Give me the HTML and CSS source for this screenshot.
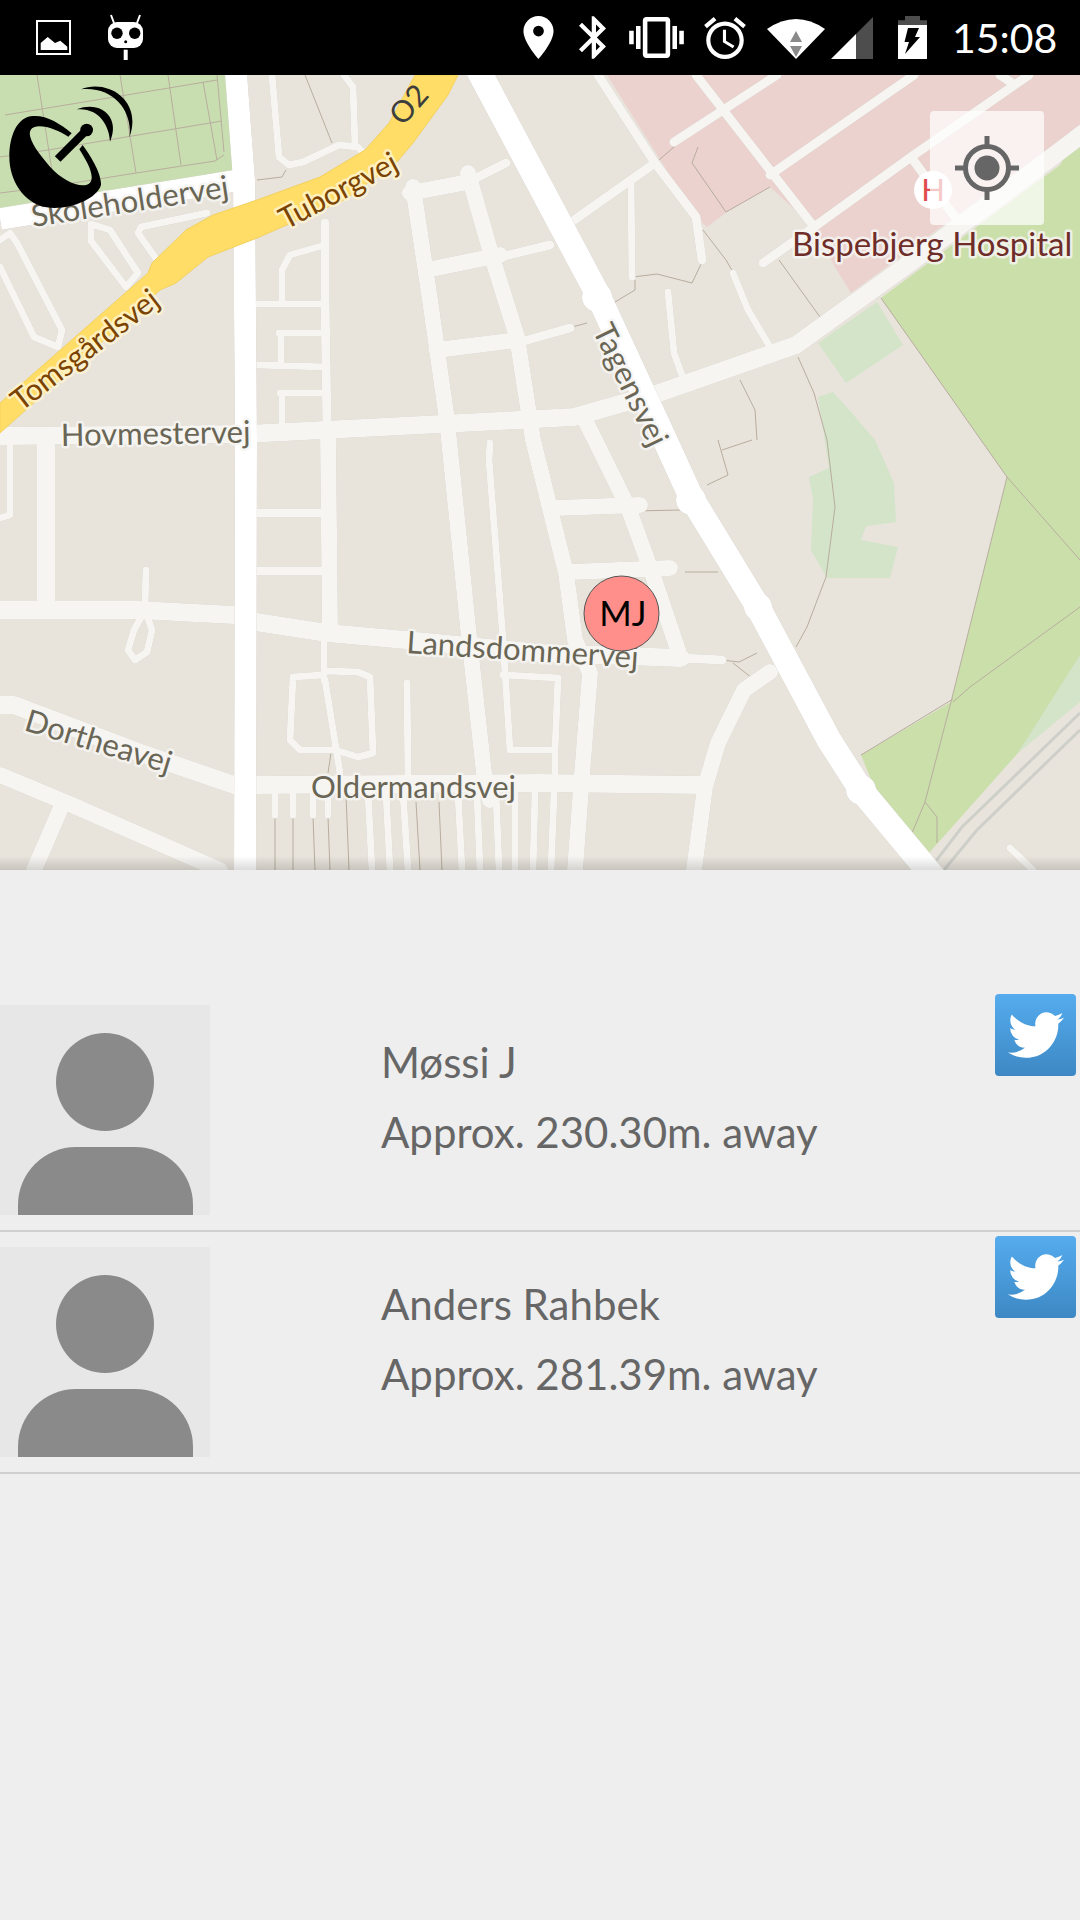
FILE: index.html
```html
<!DOCTYPE html>
<html lang="en">
<head>
    <meta charset="UTF-8">
    <meta name="viewport" content="width=device-width, initial-scale=1.0">
    <title>Nearby</title>
    <link rel="stylesheet" href="styles.css">
</head>
<body>
    <div class="status-bar">
        <div class="status-left">
            <svg class="ic-gallery" viewBox="0 0 35 35" width="35" height="35">
                <rect x="1" y="1" width="33" height="33" fill="none" stroke="#fff" stroke-width="2"/>
                <path fill="#fff" d="M4.7 30v-7l7-6 7.300 6 5.300-2.300 7 6V30z"/>
            </svg>
            <svg class="ic-cid" viewBox="0 0 35 47" width="35" height="47">
                <path stroke="#fff" stroke-width="2" d="M3 1l3 8M32 1l-3 8"/>
                <rect y="8" width="35" height="26" rx="9" fill="#fff"/>
                <circle cx="9" cy="19.300" r="5.700"/>
                <circle cx="26.700" cy="19.300" r="5.700"/>
                <circle cx="17.700" cy="27.700" r="1.500"/>
                <rect x="15.700" y="35.700" width="4" height="10.300" fill="#fff"/>
            </svg>
        </div>
        <div class="status-right">
            <svg class="ic-pin" viewBox="5 2 14 20" width="31" height="43"><path fill="#fff" d="M12 2C8.130 2 5 5.130 5 9c0 5.250 7 13 7 13s7-7.750 7-13c0-3.870-3.130-7-7-7zm0 9.500a2.500 2.500 0 010-5 2.500 2.500 0 010 5z"/></svg>
            <svg class="ic-bt" viewBox="5 2 12.710 20" width="27" height="43"><path fill="#fff" d="M17.710 7.710L12 2h-1v7.590L6.410 5 5 6.410 10.590 12 5 17.590 6.410 19 11 14.410V22h1l5.710-5.710-4.300-4.290 4.300-4.290zM13 5.830l1.880 1.880L13 9.590V5.830zm1.880 10.460L13 18.170v-3.760l1.880 1.880z"/></svg>
            <svg class="ic-vibrate" viewBox="0 3 24 18" width="55" height="41"><path fill="#fff" d="M0 15h2V9H0v6zm3 2h2V7H3v10zm19-8v6h2V9h-2zm-3 8h2V7h-2v10zM16.500 3h-9C6.670 3 6 3.670 6 4.500v15c0 .830.670 1.500 1.500 1.500h9c.830 0 1.500-.670 1.500-1.500v-15c0-.830-.670-1.500-1.500-1.500zM16 19H8V5h8v14z"/></svg>
            <svg class="ic-alarm" viewBox="2 1.860 20 20.140" width="42" height="42"><path fill="#fff" d="M22 5.720l-4.600-3.860-1.290 1.530 4.600 3.860L22 5.720zM7.880 3.390L6.600 1.860 2 5.710l1.290 1.530 4.590-3.850zM12.500 8H11v6l4.750 2.850.750-1.230-4-2.370V8zM12 4c-4.970 0-9 4.030-9 9s4.030 9 9 9 9-4.030 9-9-4.030-9-9-9zm0 16c-3.870 0-7-3.130-7-7s3.130-7 7-7 7 3.130 7 7-3.130 7-7 7z"/></svg>
            <svg class="ic-wifi" viewBox="0 0 58 42" width="58" height="42">
                <path fill="#fff" d="M0 12Q29-8 58 12L29 42z"/>
                <path fill="#8a8a8a" d="M29 14l6 11H23zM23 29h12l-6 11z"/>
            </svg>
            <svg class="ic-signal" viewBox="0 0 42 42" width="42" height="42">
                <path fill="#fff" d="M0 42l25-25v25z"/>
                <path fill="#4d4d4d" d="M25 17L42 0v42H25z"/>
            </svg>
            <svg class="ic-battery" viewBox="0 0 29 43" width="29" height="43">
                <path fill="#4d4d4d" d="M7 0h15v4.300h7V9H0V4.300h7z"/>
                <path fill="#fff" d="M0 9h29v34H0z"/>
                <path d="M10 12h11l-4 9h5L7 38l4-12H6.500z"/>
            </svg>
            <span class="clock">15:08</span>
        </div>
    </div>

    <div class="map-area">
        <svg class="map" viewBox="0 75 1080 795" width="1080" height="795">
            <rect class="land" x="0" y="75" width="1080" height="795"/>
            <path class="hospital" d="M607 75H1080V125L851 293L835 267L814 227L770 187L727 212L707 227L696 217z"/>
            <path class="park" d="M0 75H225L233 172L0 210z"/>
            <path class="park-big" d="M881 298L981 440L1007 477L951 702L861 755L874 787L929 853L1018 753L1080 660V130L1060 165z"/>
            <path class="park-pale" d="M877 302L903 345L846 383L818 343z"/>
            <path class="park-pale" d="M818 397L833 392L851 412L875 440L894 483L896 522L866 526L861 540L898 547L890 578L827 578L811 550L813 500L809 477L829 468z"/>
            <path class="park-pale" d="M1018 753L1080 655V702z"/>

            <g class="grid-lines">
                <path d="M5 115L169 88L217 80M0 157L48 150L138 135L222 121M0 193L48 187L136 173L215 161L224 155"/>
                <path d="M37 75L55 190M120 75L136 173M168 75L181 165M203 82L217 160M217 75L224 152"/>
            </g>
            <g class="boundary">
                <path d="M305 75L332 143M286 170L282 177L257 180"/>
                <path d="M674 147L659 160M698 147L692 163L726 212L770 187M703 230L726 260L733 272M779 260L820 317"/>
                <path d="M633 277L657 274L692 283L703 260M635 280V290L615 302M572 327L587 323"/>
                <path d="M798 357L814 393L827 440L835 507L826 577L807 627L796 647"/>
                <path d="M740 380L755 410L757 440M718 440L728 475L707 485M722 450L752 440"/>
                <path d="M685 572H718M631 511L683 510M722 660L739 662L757 653M733 663L752 678"/>
                <path d="M881 298L1007 477L1080 560M953 702L970 687L1080 607M1007 477L951 702L925 802L912 833"/>
                <path d="M925 802L937 817V843M861 755L953 699"/>
                <path d="M275 817V870M293 817V870M313 817L315 870M328 817L330 870M346 795L349 870M416 802L420 870M439 802L442 870M331 753L328 773"/>
            </g>

            <g class="rail">
                <path d="M929 870L962 827L1080 713M944 870L977 830L1080 730"/>
            </g>

            <g class="roads">
                <g class="w6">
                    <path d="M325 245L290 255L282 270V304H325M258 304H282M258 365L327 367M279 333H325M281 333V365M280 393H327M282 393V430"/>
                    <path d="M272 75L279 157L289 165L303 162L339 145L358 147L363 153M344 75L353 87L355 147"/>
                    <path d="M207 213L141 227L138 233L157 260M91 224V241L126 287L138 273L110 230L91 224"/>
                    <path d="M0 240L10 233L17 243L62 330L58 347L34 337L0 267"/>
                    <path d="M10 440V515L0 518M146 570L145 605M145 610L134 630L128 650L135 660L147 652L152 630z"/>
                    <path d="M324 640V680M322 675L293 677L290 740L300 750L335 750L358 757L373 753L370 677L358 672L325 671M325 680L340 773"/>
                    <path d="M407 683L408 775M490 443L489 460L503 640L510 750H555L558 678L503 675M555 755V773"/>
                    <path d="M275 793V815M293 793V815M313 793V815M328 793V815M1010 848L1033 870"/>
                    <path d="M368 793L372 870M386 793L390 870M403 793L408 870M458 793L462 870M477 793L480 870M496 793L499 870M515 793V870M535 793L533 870M554 793L551 870"/>
                    <path d="M631 180L632 277M668 292L674 353L683 378M733 273L748 310L770 347"/>
                </g>
                <g class="w8">
                    <path d="M598 75L655 163L696 217L702 260M696 75L811 223M655 163L570 223M770 175L914 75M814 227L911 157L1029 75M1000 75L1012 83M763 263L814 227M911 157L955 217"/>
                    <path d="M674 142L777 75"/>
                    <path d="M500 257L550 245M517 343L570 328M468 182L506 163M722 660L681 658M256 513H320M258 571H322"/>
                    <path d="M325 223V300L327 427"/>
                </g>
                <g class="w14">
                    <path d="M413 187L430 300L447 420L469 637L484 773L490 800M468 173L492 257L517 337L533 440L566 573L575 640L590 673L582 775L575 870M585 420L595 440L628 507L652 573L678 650"/>
                    <path d="M410 193L468 182M427 270L500 255M437 350L517 340M555 508L640 505M570 572L670 568M328 434L330 630"/>
                    <path d="M0 775L72 805L220 870M60 810L34 870M770 672L744 690L718 743L705 787L694 870"/>
                </g>
                <g class="w17">
                    <path d="M0 436L245 434L500 421L574 417L659 393L796 345L907 265L1015 185L1085 132"/>
                    <path d="M0 610H138L234 615M256 622L327 633L406 640L540 653L681 658"/>
                    <path d="M0 705H14L138 752L234 785M256 785L540 783L702 785M46 440V605"/>
                </g>
            </g>

            <g class="white-roads">
                <path class="wide" d="M235 60L244 180L246 440L245 880"/>
                <path class="wide" d="M0 219L240 180"/>
                <path class="tagens" d="M473 60L597 293L665 440L691 497L758 607L829 740L861 790L940 885"/>
                <circle cx="597" cy="297" r="15"/>
                <circle cx="691" cy="500" r="15"/>
                <circle cx="758" cy="607" r="14"/>
                <circle cx="861" cy="790" r="15"/>
            </g>

            <path class="yellow-road" d="M415 75L389 123L365 150L320 177L257 200L213 215L186 230L152 263L148 273L0 403V433L160 290L176 283L208 257L257 238L344 200L396 163L413 143L448 95L458 75z"/>

            <circle class="h-badge" cx="933" cy="190" r="19"/>
            <text class="h-letter" x="933" y="201">H</text>

            <text class="label" transform="translate(33 227) rotate(-8.700)">Skoleholdervej</text>
            <text class="label label-main" transform="translate(286 230) rotate(-28)">Tuborgvej</text>
            <text class="label label-ref" transform="translate(403 127) rotate(-49)">O2</text>
            <text class="label label-main" transform="translate(21 412) rotate(-37.600)">Tomsgårdsvej</text>
            <text class="label" transform="translate(61 446) rotate(-1)">Hovmestervej</text>
            <text class="label" transform="translate(592 330) rotate(64)">Tagensvej</text>
            <text class="label" transform="translate(406 653) rotate(3.700)">Landsdommervej</text>
            <text class="label" transform="translate(23 730) rotate(16.700)">Dortheavej</text>
            <text class="label" x="311" y="798">Oldermandsvej</text>
            <text class="label label-place" x="792" y="256">Bispebjerg Hospital</text>

            <circle class="pin-circle" cx="621.500" cy="613.500" r="37.500"/>
            <text class="pin-text" x="623" y="626">MJ</text>
        </svg>

        <svg class="logo" viewBox="0 0 140 210" width="140" height="210">
            <g transform="scale(.3333)">
                <path d="M100 348C50 350 28 410 28 470C28 540 70 610 140 622C200 632 290 600 303 555C305 520 270 465 248 435L238 448C265 490 285 530 270 548C250 570 190 545 150 500C110 455 80 410 92 390C105 365 170 385 205 410L215 400C180 370 140 346 100 348Z"/>
                <path d="M173 477L258 392" stroke="#000" stroke-width="24"/>
                <circle cx="260" cy="390" r="19"/>
                <path d="M230 328C305 300 362 355 330 425C328 375 295 322 230 328Z"/>
                <path d="M243 268C320 235 430 300 388 412C400 340 345 258 243 268Z"/>
            </g>
        </svg>

        <div class="locate-btn">
            <svg viewBox="0 0 66 66" width="66" height="66">
                <circle cx="33" cy="33" r="21.500" fill="none" stroke="#666" stroke-width="5"/>
                <circle cx="33" cy="33" r="12.500" fill="#666"/>
                <path stroke="#666" stroke-width="5" d="M33 1v10M33 55v10M1 33h10M55 33h10"/>
            </svg>
        </div>

        <div class="map-shadow"></div>
    </div>

    <div class="people">
        <div class="person">
            <div class="avatar">
                <div class="avatar-head"></div>
                <div class="avatar-body"></div>
            </div>
            <div class="person-info">
                <p>Møssi J</p>
                <p>Approx. 230.30m. away</p>
            </div>
            <div class="twitter-btn">
                <svg viewBox="0 0 24 24" width="56" height="56"><path fill="#fff" d="M23.953 4.570a10 10 0 01-2.825.775 4.958 4.958 0 002.163-2.723c-.951.555-2.005.959-3.127 1.184a4.920 4.920 0 00-8.384 4.482C7.690 8.095 4.067 6.130 1.640 3.162a4.822 4.822 0 00-.666 2.475c0 1.710.870 3.213 2.188 4.096a4.904 4.904 0 01-2.228-.616v.060a4.923 4.923 0 003.946 4.827 4.996 4.996 0 01-2.212.085 4.936 4.936 0 004.604 3.417 9.867 9.867 0 01-6.102 2.105c-.390 0-.779-.023-1.170-.067a13.995 13.995 0 007.557 2.209c9.053 0 13.998-7.496 13.998-13.985 0-.210 0-.420-.015-.630A9.935 9.935 0 0024 4.590z"/></svg>
            </div>
        </div>
        <div class="person">
            <div class="avatar">
                <div class="avatar-head"></div>
                <div class="avatar-body"></div>
            </div>
            <div class="person-info">
                <p>Anders Rahbek</p>
                <p>Approx. 281.39m. away</p>
            </div>
            <div class="twitter-btn">
                <svg viewBox="0 0 24 24" width="56" height="56"><path fill="#fff" d="M23.953 4.570a10 10 0 01-2.825.775 4.958 4.958 0 002.163-2.723c-.951.555-2.005.959-3.127 1.184a4.920 4.920 0 00-8.384 4.482C7.690 8.095 4.067 6.130 1.640 3.162a4.822 4.822 0 00-.666 2.475c0 1.710.870 3.213 2.188 4.096a4.904 4.904 0 01-2.228-.616v.060a4.923 4.923 0 003.946 4.827 4.996 4.996 0 01-2.212.085 4.936 4.936 0 004.604 3.417 9.867 9.867 0 01-6.102 2.105c-.390 0-.779-.023-1.170-.067a13.995 13.995 0 007.557 2.209c9.053 0 13.998-7.496 13.998-13.985 0-.210 0-.420-.015-.630A9.935 9.935 0 0024 4.590z"/></svg>
            </div>
        </div>
    </div>
</body>
</html>
```

FILE: styles.css
```css
* {
    padding: 0;
    margin: 0;
    box-sizing: border-box;
}
html, body {
    height: 100%;
}
body {
    width: 1080px;
    min-height: 1920px;
    background: #eeeeee;
    font-family: Lato, "Liberation Sans", sans-serif;
    overflow: hidden;
}

/* status bar */
.status-bar {
    height: 75px;
    background: #000;
    display: flex;
    justify-content: space-between;
    align-items: center;
}
.status-bar svg {
    display: block;
    flex: none;
}
.status-left {
    display: flex;
    align-items: center;
    gap: 37px;
    padding-left: 36px;
}
.status-right {
    display: flex;
    align-items: center;
    padding-right: 25px;
}
.ic-bt {
    margin-left: 25px;
}
.ic-vibrate {
    margin-left: 23px;
}
.ic-alarm {
    margin-left: 20px;
}
.ic-wifi {
    margin-left: 21px;
}
.ic-signal {
    margin-left: 6px;
}
.ic-battery {
    margin-left: 25px;
}
.clock {
    width: 103px;
    margin-left: 25px;
    color: #fff;
    font-size: 41px;
    line-height: 50px;
    white-space: nowrap;
}

/* map */
.map-area {
    position: relative;
    height: 795px;
    overflow: hidden;
}
.map {
    display: block;
}
.land {
    fill: #e8e4dc;
}
.hospital {
    fill: #ebd2cf;
}
.park {
    fill: #c9deb0;
}
.park-big {
    fill: #cbdfab;
}
.park-pale {
    fill: #d3e4c9;
}
.grid-lines path, .boundary path {
    fill: none;
    stroke: #b8ad9e;
    stroke-width: 1;
}
.rail path {
    fill: none;
    stroke: #cfcfca;
    stroke-width: 3;
}
.roads {
    fill: none;
    stroke: #f6f5f2;
    stroke-linecap: round;
    stroke-linejoin: round;
    filter: drop-shadow(0 0 .6px #c4beb2);
}
.w6 {
    stroke-width: 7;
}
.w8 {
    stroke-width: 9;
}
.w14 {
    stroke-width: 16;
}
.w17 {
    stroke-width: 18;
}
.white-roads {
    fill: #fff;
    filter: drop-shadow(0 0 .6px #b8b2a6);
}
.white-roads path {
    fill: none;
    stroke: #fff;
    stroke-linejoin: round;
}
.white-roads .wide {
    stroke-width: 22;
}
.white-roads .tagens {
    stroke-width: 25;
}
.yellow-road {
    fill: #ffdd66;
    stroke: #f2d160;
    stroke-width: 1;
}
.h-badge {
    fill: #fff;
}
.h-letter {
    fill: #e04b4b;
    font-size: 31px;
    text-anchor: middle;
}
.label {
    font-size: 31px;
    fill: #6a6656;
    stroke: rgba(246, 245, 242, .85);
    stroke-width: 5px;
    stroke-linejoin: round;
    paint-order: stroke;
}
.label-main {
    font-size: 30px;
    fill: #7a4300;
    stroke: rgba(255, 245, 210, .8);
}
.label-ref {
    font-size: 30px;
    fill: #3d3d3d;
    stroke: none;
}
.label-place {
    font-size: 33px;
    fill: #6e2d28;
}
.pin-circle {
    fill: #ff8f8a;
    stroke: #555;
    stroke-width: 1;
}
.pin-text {
    font-size: 35px;
    fill: #000;
    text-anchor: middle;
}

/* things on top of the map */
.logo {
    position: absolute;
    left: 0;
    top: -75px;
}
.locate-btn {
    position: absolute;
    left: 930px;
    top: 36px;
    width: 114px;
    height: 114px;
    background: rgba(255, 255, 255, .7);
    border-radius: 4px;
    display: flex;
    justify-content: center;
    align-items: center;
}
.map-shadow {
    position: absolute;
    left: 0;
    right: 0;
    bottom: 0;
    height: 14px;
    background: linear-gradient(rgba(0, 0, 0, 0), rgba(0, 0, 0, .14));
}

/* list */
.people {
    padding-top: 135px;
}
.person {
    display: flex;
    align-items: flex-start;
    padding-bottom: 15px;
    margin-bottom: 15px;
    border-bottom: 2px solid #cfcfcf;
}
.avatar {
    width: 210px;
    height: 210px;
    background: #e7e7e7;
    flex: none;
    display: flex;
    flex-direction: column;
    align-items: center;
    padding-top: 28px;
    overflow: hidden;
}
.avatar-head {
    width: 98px;
    height: 98px;
    background: #8a8a8a;
    border-radius: 50%;
}
.avatar-body {
    width: 175px;
    height: 68px;
    margin-top: 16px;
    background: #8a8a8a;
    border-radius: 58px 58px 0 0;
}
.person-info {
    margin-left: 171px;
    padding-top: 22px;
    color: #666;
    font-size: 42px;
    line-height: 70px;
}
.twitter-btn {
    margin-left: auto;
    margin-right: 4px;
    margin-top: -11px;
    width: 81px;
    height: 82px;
    border-radius: 4px;
    background: linear-gradient(#55acee, #3d88c4);
    display: flex;
    justify-content: center;
    align-items: center;
}
```
